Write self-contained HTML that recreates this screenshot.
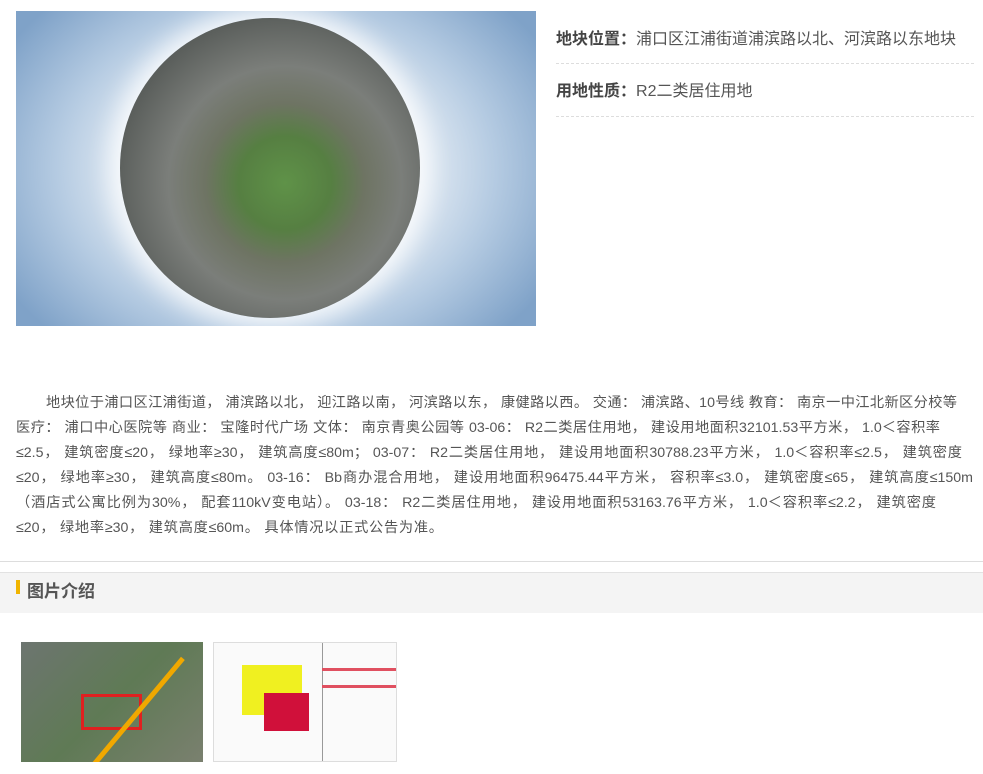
<!DOCTYPE html>
<html><head><meta charset="utf-8"><style>
body{margin:0;width:983px;height:774px;overflow:hidden;background:#fff;font-family:"Liberation Sans","Noto Sans CJK SC",sans-serif;color:#555;position:relative}
.abs{position:absolute}
.img1{left:16px;top:11px;width:520px;height:315px;background:radial-gradient(ellipse 60% 75% at 50% 50%,#f4f7fb 0%,#e4ecf4 45%,#b5cbe2 70%,#7fa2c8 100%)}
.sphere{left:120px;top:18px;width:300px;height:300px;border-radius:50%;background:radial-gradient(circle at 55% 55%,#5f9248 0%,#567f42 20%,#6e7463 34%,#7b7e7a 50%,#5b5f5c 72%,#50565c 92%,#9aabb8 100%);box-shadow:0 0 24px 10px rgba(255,255,255,.8)}
.row{left:556px;width:418px;font-size:16px;color:#555;border-bottom:1px dashed #ddd}
.row b{color:#444}
.p{left:16px;top:391px;width:967px;font-size:14.2px;line-height:25px;color:#555}
.p div{white-space:nowrap;text-align:justify;text-align-last:justify;height:25px}
</style></head><body>
<div class="abs img1"></div>
<div class="abs sphere"></div>
<div class="abs row" style="top:28px;height:35px;line-height:24px"><b>地块位置：</b>浦口区江浦街道浦滨路以北、河滨路以东地块</div>
<div class="abs row" style="top:80px;height:36px;line-height:24px"><b>用地性质：</b>R2二类居住用地</div>
<div class="abs p">
<div style="margin-left:30px;width:911px">地块位于浦口区江浦街道， 浦滨路以北， 迎江路以南， 河滨路以东， 康健路以西。 交通： 浦滨路、10号线 教育： 南京一中江北新区分校等</div>
<div style="width:924px">医疗： 浦口中心医院等 商业： 宝隆时代广场 文体： 南京青奥公园等 03-06： R2二类居住用地， 建设用地面积32101.53平方米， 1.0＜容积率</div>
<div style="width:946px">≤2.5， 建筑密度≤20， 绿地率≥30， 建筑高度≤80m； 03-07： R2二类居住用地， 建设用地面积30788.23平方米， 1.0＜容积率≤2.5， 建筑密度</div>
<div style="width:957px">≤20， 绿地率≥30， 建筑高度≤80m。 03-16： Bb商办混合用地， 建设用地面积96475.44平方米， 容积率≤3.0， 建筑密度≤65， 建筑高度≤150m</div>
<div style="width:920px">（酒店式公寓比例为30%， 配套110kV变电站）。 03-18： R2二类居住用地， 建设用地面积53163.76平方米， 1.0＜容积率≤2.2， 建筑密度</div>
<div style="width:427px">≤20， 绿地率≥30， 建筑高度≤60m。 具体情况以正式公告为准。</div>
</div>
<div class="abs" style="left:0;top:561px;width:983px;border-top:1px solid #ddd"></div>
<div class="abs" style="left:0;top:572px;width:983px;height:40px;background:#f4f4f4;border-top:1px solid #e2e2e2"></div>
<div class="abs" style="left:16px;top:580px;width:4px;height:14px;background:#f0b400"></div>
<div class="abs" style="left:27px;top:580px;font-size:17px;font-weight:bold;color:#555;line-height:24px">图片介绍</div>
<div class="abs" style="left:21px;top:642px;width:182px;height:120px;overflow:hidden;background:linear-gradient(135deg,#6d7570,#5f7a55 50%,#7a806f)">
<div class="abs" style="left:60px;top:52px;width:55px;height:30px;border:3px solid #e02020"></div>
<div class="abs" style="left:70px;top:122px;width:140px;height:5px;background:#f0a800;transform:rotate(-50deg);transform-origin:0 0"></div>
</div>
<div class="abs" style="left:213px;top:642px;width:182px;height:118px;background:#fafafa;border:1px solid #ddd">
<div class="abs" style="left:28px;top:22px;width:60px;height:50px;background:#f0f020"></div>
<div class="abs" style="left:50px;top:50px;width:45px;height:38px;background:#d0103a"></div>
<div class="abs" style="left:108px;top:0;width:1px;height:118px;background:#999"></div>
<div class="abs" style="left:108px;top:25px;width:74px;height:3px;background:#e05060"></div>
<div class="abs" style="left:108px;top:42px;width:74px;height:3px;background:#e05060"></div>
</div>
</body></html>
